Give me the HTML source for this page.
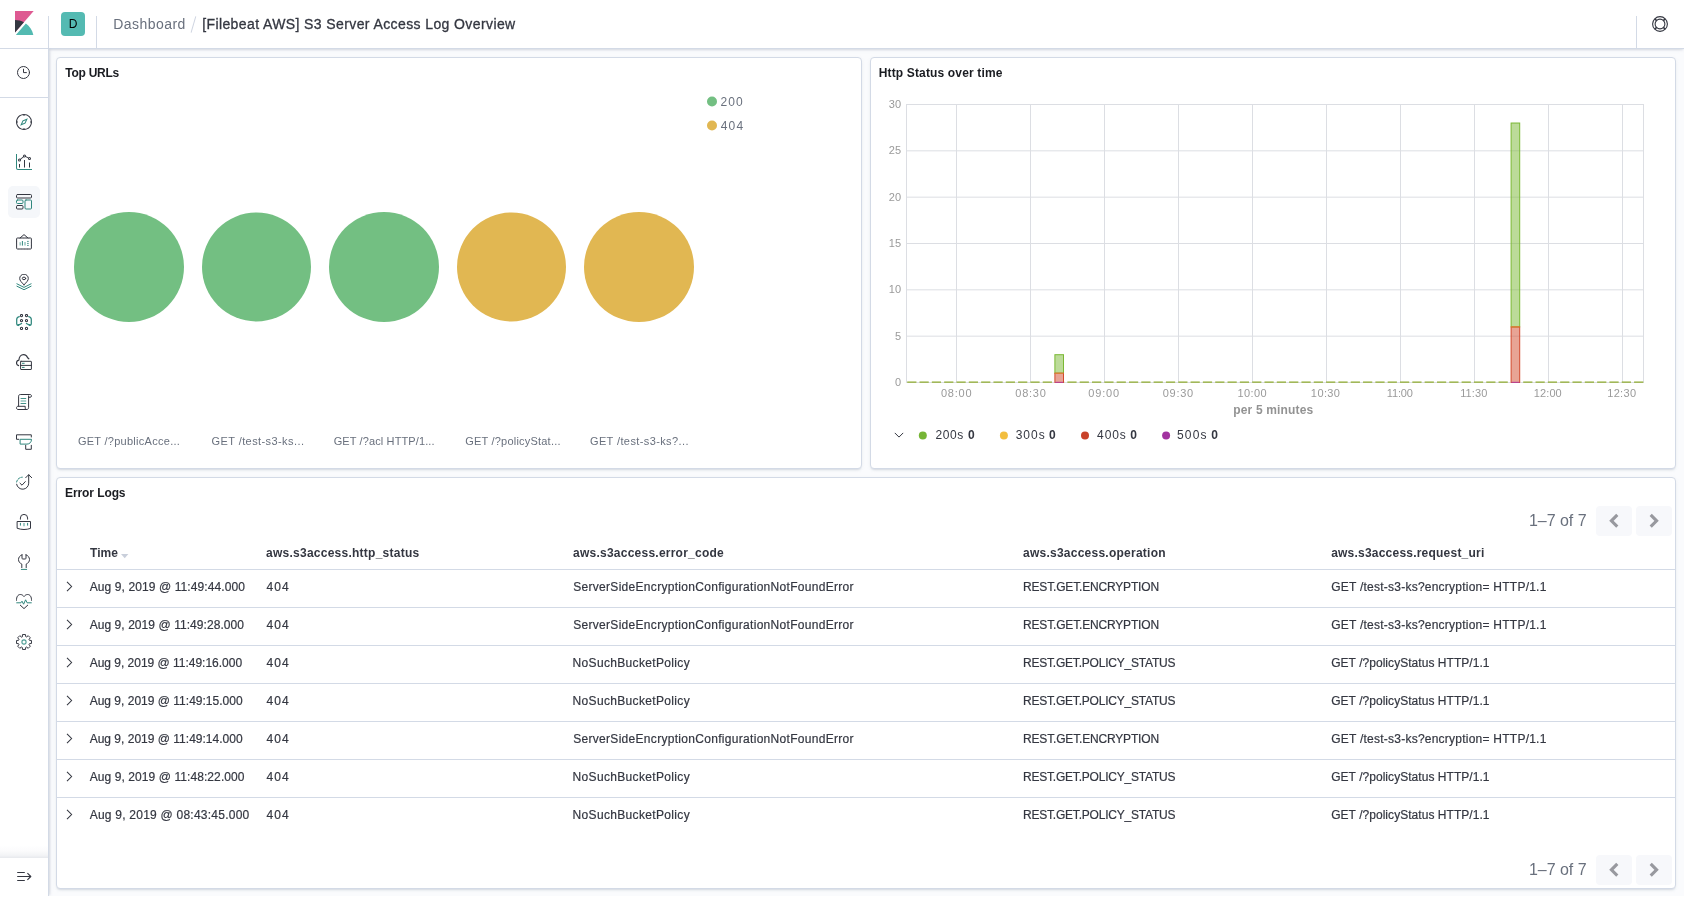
<!DOCTYPE html>
<html lang="en">
<head>
<meta charset="utf-8">
<title>[Filebeat AWS] S3 Server Access Log Overview - Kibana</title>
<style>
*{box-sizing:border-box;margin:0;padding:0}
html,body{width:1684px;height:897px;overflow:hidden;background:#fff}
body{font-family:"Liberation Sans",sans-serif;color:#343741;font-size:14px;position:relative}
#app{position:absolute;left:0;top:0;width:1684px;height:896px;background:#fafbfd;overflow:hidden;will-change:transform}
.abs{position:absolute}
/* header */
#header{position:absolute;left:0;top:0;width:1684px;height:49px;background:#fff;border-bottom:1px solid #d3dae6;box-shadow:0 2px 2px -1px rgba(152,162,179,.3),0 1px 5px -2px rgba(152,162,179,.3);z-index:5}
.hsep{position:absolute;top:16px;width:1px;height:32px;background:#d3dae6}
#avatar{position:absolute;left:61px;top:12px;width:24px;height:24px;border-radius:4px;background:#54bab2;color:#000;font-size:12px;font-weight:400;text-align:center;line-height:24px}
#c3{-webkit-text-stroke:.3px #343741}
.crumb{position:absolute;top:15px;height:18px;line-height:18px;font-size:14px;white-space:nowrap}
/* sidebar */
#nav{position:absolute;left:0;top:49px;width:49px;height:847px;background:#fff;border-right:1px solid #d3dae6;box-shadow:2px 0 2px -1px rgba(152,162,179,.3),1px 0 5px -2px rgba(152,162,179,.3);z-index:6}
#navcover{position:absolute;left:0;top:0;width:48px;height:49px;background:#fff;border-bottom:1px solid #d3dae6;z-index:7}
.ni{position:absolute;left:16px;width:16px;height:16px}
.ni svg{display:block;width:16px;height:16px;fill:#343741}
.ni .s{fill:#3b9a92}
/* panels */
.panel{position:absolute;background:#fff;border:1px solid #d3dae6;border-radius:4px;box-shadow:0 2px 2px -1px rgba(152,162,179,.3),0 1px 5px -2px rgba(152,162,179,.3)}
.ptitle{position:absolute;left:8px;top:8px;font-size:12px;font-weight:700;color:#1a1c21;line-height:14px;white-space:nowrap}
.t{position:absolute;white-space:nowrap}
.pg{font-size:16px;line-height:20px;color:#69707d}
.pb svg{transform:translateY(-.7px)}
.pb{position:absolute;width:35.500px;height:30px;border-radius:4px;background:#f7f8fb;display:flex;align-items:center;justify-content:center}
.th{font-size:12px;line-height:14px;font-weight:700;color:#343741}
.td{font-size:12px;line-height:14px;color:#343741;-webkit-text-stroke:.2px #343741}
.rl{position:absolute;left:0;width:1618px;height:1px;background:#d3dae6}

.lg{font-size:12px;line-height:14px;color:#69707d;letter-spacing:.3px}
.bl{top:376px;width:0;overflow:visible;font-size:11px;line-height:14px;color:#69707d;display:flex;justify-content:center;letter-spacing:.3px}
.bl span{flex:none}

</style>
<style id="tune">
#bl1{letter-spacing:0.276px}
#bl2{letter-spacing:0.414px;transform:translate(1.44px,0.00px)}
#bl3{letter-spacing:0.116px;transform:translate(0.16px,0.00px)}
#bl4{letter-spacing:0.209px;transform:translate(1.44px,0.00px)}
#bl5{letter-spacing:0.391px;transform:translate(0.40px,0.00px)}
#c1{letter-spacing:0.460px;transform:translate(0.16px,0.00px)}
#c3{letter-spacing:0.398px;transform:translate(0.16px,0.00px)}
#h0{letter-spacing:0.053px;transform:translate(0.48px,0.00px)}
#h1{letter-spacing:0.250px;transform:translate(-0.48px,0.00px)}
#h2{letter-spacing:0.240px;transform:translate(-0.48px,0.00px)}
#h3{letter-spacing:0.244px;transform:translate(-0.48px,0.00px)}
#h4{letter-spacing:0.216px;transform:translate(-0.32px,0.00px)}
#lg1{letter-spacing:1.120px;transform:translate(-0.48px,0.00px)}
#lg2{letter-spacing:1.200px;transform:translate(-0.32px,0.00px)}
#ln0{letter-spacing:0.533px;transform:translate(-0.08px,0.00px)}
#ln1{letter-spacing:1.013px;transform:translate(-1.04px,0.00px)}
#ln2{letter-spacing:0.907px;transform:translate(-0.72px,0.00px)}
#ln3{letter-spacing:1.120px;transform:translate(-1.84px,0.00px)}
#per5{letter-spacing:0.167px;transform:translate(0.16px,0.00px)}
#pg1{letter-spacing:-0.023px;transform:translate(-1.12px,0.00px)}
#pg2{letter-spacing:-0.023px;transform:translate(-1.12px,0.00px)}
#r0c0{letter-spacing:0.102px;transform:translate(0.16px,0.00px)}
#r0c1{letter-spacing:1.120px}
#r0c2{letter-spacing:0.302px;transform:translate(-0.32px,0.00px)}
#r0c3{letter-spacing:-0.169px;transform:translate(-0.48px,0.00px)}
#r0c4{letter-spacing:0.238px;transform:translate(-0.32px,0.00px)}
#r1c0{letter-spacing:0.064px;transform:translate(0.16px,0.00px)}
#r1c1{letter-spacing:1.120px}
#r1c2{letter-spacing:0.302px;transform:translate(-0.32px,0.00px)}
#r1c3{letter-spacing:-0.169px;transform:translate(-0.48px,0.00px)}
#r1c4{letter-spacing:0.238px;transform:translate(-0.32px,0.00px)}
#r2c0{letter-spacing:-0.013px;transform:translate(0.16px,0.00px)}
#r2c1{letter-spacing:1.120px}
#r2c2{letter-spacing:0.339px;transform:translate(-0.96px,0.00px)}
#r2c3{letter-spacing:-0.213px;transform:translate(-0.48px,0.00px)}
#r2c4{letter-spacing:0.043px;transform:translate(-0.32px,0.00px)}
#r3c0{letter-spacing:0.006px;transform:translate(0.16px,0.00px)}
#r3c1{letter-spacing:1.120px}
#r3c2{letter-spacing:0.339px;transform:translate(-0.96px,0.00px)}
#r3c3{letter-spacing:-0.213px;transform:translate(-0.48px,0.00px)}
#r3c4{letter-spacing:0.043px;transform:translate(-0.32px,0.00px)}
#r4c0{letter-spacing:0.006px;transform:translate(0.16px,0.00px)}
#r4c1{letter-spacing:1.120px}
#r4c2{letter-spacing:0.302px;transform:translate(-0.32px,0.00px)}
#r4c3{letter-spacing:-0.169px;transform:translate(-0.48px,0.00px)}
#r4c4{letter-spacing:0.238px;transform:translate(-0.32px,0.00px)}
#r5c0{letter-spacing:0.083px;transform:translate(0.16px,0.00px)}
#r5c1{letter-spacing:1.120px}
#r5c2{letter-spacing:0.339px;transform:translate(-0.96px,0.00px)}
#r5c3{letter-spacing:-0.213px;transform:translate(-0.48px,0.00px)}
#r5c4{letter-spacing:0.043px;transform:translate(-0.32px,0.00px)}
#r6c0{letter-spacing:0.237px;transform:translate(0.16px,0.00px)}
#r6c1{letter-spacing:1.120px}
#r6c2{letter-spacing:0.339px;transform:translate(-0.96px,0.00px)}
#r6c3{letter-spacing:-0.213px;transform:translate(-0.48px,0.00px)}
#r6c4{letter-spacing:0.043px;transform:translate(-0.32px,0.00px)}
#t1{letter-spacing:-0.274px;transform:translate(0.32px,0.00px)}
#t2{letter-spacing:0.152px;transform:translate(-0.32px,0.00px)}
#t3{letter-spacing:-0.089px}
#xl0{letter-spacing:0.800px;transform:translate(0.48px,0.00px)}
#xl1{letter-spacing:0.740px;transform:translate(0.72px,0.00px)}
#xl2{letter-spacing:0.800px;transform:translate(-0.08px,0.00px)}
#xl3{letter-spacing:0.740px;transform:translate(0.16px,0.00px)}
#xl4{letter-spacing:0.380px;transform:translate(0.08px,0.00px)}
#xl5{letter-spacing:0.400px;transform:translate(-0.56px,0.00px)}
#xl6{letter-spacing:-0.160px;transform:translate(-0.40px,0.00px)}
#xl7{letter-spacing:0.080px;transform:translate(-0.40px,0.00px)}
#xl8{letter-spacing:0.120px;transform:translate(-0.40px,0.00px)}
#xl9{letter-spacing:0.300px;transform:translate(-0.40px,0.00px)}
</style>
</head>
<body>
<div id="app">

<!-- HEADER -->
<div id="header">
  <div class="hsep" style="left:48px"></div>
  <div class="hsep" style="left:96px"></div>
  <div id="avatar">D</div>
  <div class="crumb" id="c1" style="left:113px;color:#69707d">Dashboard</div>
  <div class="abs" style="left:193px;top:15.500px;width:1px;height:16.500px;background:#cfd5e1;transform:rotate(16deg)"></div>
  <div class="crumb" id="c3" style="left:202px;color:#343741">[Filebeat AWS] S3 Server Access Log Overview</div>
  <div class="hsep" style="left:1636px"></div>
  <svg class="abs" style="left:1652px;top:16px" width="16" height="16" viewBox="0 0 16 16" fill="none" stroke="#343741" stroke-width="1.1"><circle cx="8" cy="8" r="7.400"/><circle cx="8" cy="8" r="4.900"/><path d="M2.800 2.800l1.800 1.800M13.200 2.800l-1.800 1.800M2.800 13.200l1.800-1.800M13.200 13.200l-1.800-1.800" stroke-width="1.500"/></svg>
</div>
<div id="navcover">
  <svg class="abs" style="left:12px;top:11px" width="24" height="24" viewBox="0 0 32 32"><polygon fill="#de5a92" points="4 0 4 28.789 28.935 .017"/><path fill="#343741" d="M4,12 L4,28.789 L15.906,15.051 C12.368,13.115 8.317,12 4,12"/><path fill="#53bab1" d="M18.4791,16.6643 L6.2681,30.7543 L5.1861,32.0003 L28.4381,32.0003 C27.1631,25.7073 23.6231,20.2623 18.4791,16.6643"/></svg>
</div>

<!-- SIDEBAR -->
<div id="nav">
  <div class="abs" style="left:0;top:48px;width:48px;height:1px;background:#d3dae6"></div>
  <div class="abs" style="left:0;top:796px;width:48px;height:13px;background:linear-gradient(to bottom,rgba(152,162,179,0) 0%,rgba(152,162,179,.04) 45%,rgba(152,162,179,.12) 80%,rgba(152,162,179,.24) 100%)"></div>
  <div class="abs" style="left:8px;top:137px;width:32px;height:32px;border-radius:5px;background:#f5f7fa"></div>
  <svg class="abs" style="left:16px;top:16px" width="16" height="16" viewBox="0 0 16 16" fill="none" stroke="#343741" stroke-width="1" stroke-linecap="round" stroke-linejoin="round"><circle cx="7.5" cy="7.5" r="6"/><path d="M7.5 4.2V7.6H10.4"/></svg>
  <svg class="abs" style="left:16px;top:65px" width="16" height="16" viewBox="0 0 32 32" fill="none" stroke="#343741" stroke-width="1" stroke-linecap="round" stroke-linejoin="round"><path stroke="none" fill="#2f877d" d="M8.33 23.67l4.79-10.55 10.55-4.79-4.79 10.55-10.55 4.79zm6.3-9l-2.28 5 5-2.28 2.28-5-5 2.28z"/><path stroke="none" fill="#343741" d="M16 0C7.163 0 0 7.163 0 16s7.163 16 16 16 16-7.163 16-16A16 16 0 0 0 16 0zm1 29.950V28h-2v1.950A14 14 0 0 1 2.050 17H4v-2H2.050A14 14 0 0 1 15 2.050V4h2V2.050A14 14 0 0 1 29.950 15H28v2h1.950A14 14 0 0 1 17 29.950z"/></svg>
  <svg class="abs" style="left:16px;top:105px" width="16" height="16" viewBox="0 0 32 32" fill="none" stroke="#343741" stroke-width="1" stroke-linecap="round" stroke-linejoin="round"><path stroke="none" fill="#2f877d" d="M32 32H4a4 4 0 0 1-4-4V0h2v28a2 2 0 0 0 2 2h28v2z"/><path stroke="none" fill="#343741" d="M6 20h2v7H6zM16 12h2v15h-2zM26 17h2v10h-2z"/><path stroke="none" fill="#343741" d="M27 6a3 3 0 0 0-2.080.840L20 4.360A2.200 2.200 0 0 0 20 4a3 3 0 0 0-6 0c.001.341.062.680.180 1L9 9.740A3 3 0 0 0 7 9a3 3 0 1 0 3 3 3 3 0 0 0-.180-1L15 6.260A3 3 0 0 0 17 7a3 3 0 0 0 2.080-.840L24 8.640A2.200 2.200 0 0 0 24 9a3 3 0 1 0 3-3zM7 13a1 1 0 1 1 0-2 1 1 0 0 1 0 2zm10-8a1 1 0 1 1 0-2 1 1 0 0 1 0 2zm10 5a1 1 0 1 1 0-2 1 1 0 0 1 0 2z"/></svg>
  <svg class="abs" style="left:16px;top:145px" width="16" height="16" viewBox="0 0 16 16" fill="none" stroke="#343741" stroke-width="1" stroke-linecap="round" stroke-linejoin="round"><rect x="0.5" y="0.5" width="15" height="3.5" rx="1"/><rect x="0.5" y="6" width="6.5" height="3.5" rx="1" stroke="#2f877d"/><rect x="0.5" y="11.5" width="6.5" height="3.5" rx="1"/><rect x="9" y="6" width="6.500" height="9" rx="1" stroke="#2f877d"/></svg>
  <svg class="abs" style="left:16px;top:185px" width="16" height="16" viewBox="0 0 16 16" fill="none" stroke="#343741" stroke-width="1" stroke-linecap="round" stroke-linejoin="round"><path d="M4 4L8 0.600 12 4"/><rect x="0.6" y="4" width="14.800" height="11" rx="0.8" stroke-dasharray="2.600 0.500"/><path d="M4.200 8.200v3.400M9 8v3.600" stroke="#8fc1ba" stroke-width="1.400" stroke-linecap="butt"/><path d="M6.400 7v4.600" stroke="#2f877d" stroke-linecap="butt"/><path d="M11 7.400h1.800M11 9.400h1.800M11 11.400h1.800" stroke="#2f877d" stroke-width="0.800" stroke-linecap="butt"/></svg>
  <svg class="abs" style="left:16px;top:225px" width="16" height="16" viewBox="0 0 16 16" fill="none" stroke="#343741" stroke-width="1" stroke-linecap="round" stroke-linejoin="round"><path d="M0.900 9.800L8 13.400 15.100 9.800M0.900 12.200L8 15.700 15.100 12.200" stroke="#2f877d"/><path d="M8 10.800C5.500 8.200 3.700 6.600 3.700 4.500a4.300 4.300 0 0 1 8.600 0c0 2.100-1.800 3.700-4.300 6.300z" fill="#fff"/><ellipse cx="8" cy="4.400" rx="1.700" ry="1.300"/></svg>
  <svg class="abs" style="left:16px;top:265px" width="16" height="16" viewBox="0 0 16 16" fill="none" stroke="#343741" stroke-width="1" stroke-linecap="round" stroke-linejoin="round"><circle cx="5.5" cy="1.6" r="1.100" stroke-width="1.100"/><circle cx="5.5" cy="6.6" r="1.100" stroke-width="1.100"/><circle cx="5.5" cy="14.4" r="1.100" stroke-width="1.100"/><circle cx="10.5" cy="1.6" r="1.100" stroke-width="1.100"/><circle cx="10.5" cy="6.6" r="1.100" stroke-width="1.100"/><circle cx="10.5" cy="14.4" r="1.100" stroke-width="1.100"/><path d="M3.300 2.600C1.500 3 0.700 4 0.700 5.500v4.300c0 .8.500 1.400 1.300 1.600l3.600-1.900M12.700 2.600c1.800.4 2.600 1.400 2.600 2.900v4.300c0 .8-.5 1.400-1.300 1.600l-3.600-1.900" stroke="#2f877d" stroke-width="1.250"/><path d="M1 10.300l1.800 2 .7-2.400zM15 10.300l-1.800 2-.7-2.400z" fill="#2f877d" stroke="none"/></svg>
  <svg class="abs" style="left:16px;top:305px" width="16" height="16" viewBox="0 0 16 16" fill="none" stroke="#343741" stroke-width="1" stroke-linecap="round" stroke-linejoin="round"><path d="M2.600 11.600C1.200 11.200 0.500 10.200 0.500 8.900c0-1.500 1-2.600 2.400-2.800C3.100 3 5 0.600 7.500 0.600c2 0 3.500 1.300 4.100 3.300.500.100.900.400 1.300.900" stroke-width="1.150"/><rect x="4.600" y="7.300" width="10.800" height="8.200" rx="0.400"/><path d="M4.600 11.400h10.800"/><path d="M6.400 9.300h1.800M6.400 13.400h1.800" stroke="#2f877d"/></svg>
  <svg class="abs" style="left:16px;top:345px" width="16" height="16" viewBox="0 0 16 16" fill="none" stroke="#343741" stroke-width="1" stroke-linecap="round" stroke-linejoin="round"><path d="M2.600 12V2.200c0-1 .700-1.700 1.700-1.700h9.600c.900 0 1.600.600 1.600 1.400s-.600 1.400-1.400 1.400h-1.500V1.900M12.600 3.300v10.400c0 1-.800 1.800-1.800 1.800H2c-.900 0-1.500-.700-1.500-1.600s.600-1.600 1.500-1.600h7.200v1.600c0 .800.500 1.500 1.300 1.600"/><path d="M4.600 4.500h5.600M4.600 9.500h5.600" stroke="#2f877d" stroke-width="0.900" stroke-linecap="butt"/><path d="M4.600 7h5.600" stroke="#8fc1ba" stroke-width="1.400" stroke-linecap="butt"/></svg>
  <svg class="abs" style="left:16px;top:385px" width="16" height="16" viewBox="0 0 16 16" fill="none" stroke="#343741" stroke-width="1" stroke-linecap="round" stroke-linejoin="round"><path d="M2.800 5.300H0.500V0.800h14.800v2.200M9.700 11.300v4h5.600v-4"/><path d="M4.500 5.300h11c0 3-2 4.800-4.500 4.800H4.500z" stroke="#2f877d"/></svg>
  <svg class="abs" style="left:16px;top:425px" width="16" height="16" viewBox="0 0 16 16" fill="none" stroke="#343741" stroke-width="1" stroke-linecap="round" stroke-linejoin="round"><path d="M0.600 10.200a6.100 6.100 0 0 0 12.100-1V0.800M9.700 3.700l3-3 3 3M4 9.200l2 2 3.300-3.600"/><path d="M0.600 8a6.100 6.100 0 0 1 5.700-4.800" stroke="#2f877d" stroke-dasharray="2.200 1.300"/></svg>
  <svg class="abs" style="left:16px;top:465px" width="16" height="16" viewBox="0 0 16 16" fill="none" stroke="#343741" stroke-width="1" stroke-linecap="round" stroke-linejoin="round"><path d="M4.400 5.200V4a3.600 3.600 0 0 1 7.200 0v1.200M1.500 7.500h13v6.900c-2 .700-4.300 1.100-6.500 1.100s-4.500-.400-6.500-1.100z"/><path d="M4.400 8.900v2.700M11.600 8.900v2.700" stroke="#2f877d" stroke-linecap="butt"/><path d="M8 8.900v3.400" stroke="#8fc1ba" stroke-width="1.600" stroke-linecap="butt"/></svg>
  <svg class="abs" style="left:16px;top:505px" width="16" height="16" viewBox="0 0 16 16" fill="none" stroke="#343741" stroke-width="1" stroke-linecap="round" stroke-linejoin="round"><path d="M6 0.800C3.800 1.600 2.500 3.400 2.500 5.600c0 1.900 1.200 3.500 3.300 4.500v3.500M10 0.800c2.200.800 3.500 2.600 3.500 4.800 0 1.900-1.200 3.500-3.300 4.500v3.500M6 0.800v3.400c0 .500.300.800.800.800h2.400c.500 0 .800-.300.800-.800V0.800"/><path d="M5.300 15.400h5.400" stroke="#2f877d"/></svg>
  <svg class="abs" style="left:16px;top:545px" width="16" height="16" viewBox="0 0 16 16" fill="none" stroke="#343741" stroke-width="1" stroke-linecap="round" stroke-linejoin="round"><path d="M0.500 6.300C0.300 2.800 2 0.500 4.300 0.500 5.800 0.500 7 1.200 8 2.600 9 1.200 10.200 0.500 11.700 0.500c2.300 0 4 2.300 3.800 5.800M4.300 11.200L8 14.600l3.700-3.400"/><path d="M0.300 8.800h4.600l1.100-1.600 1.600 3 2-4.400 1.500 3h4.600" stroke="#2f877d" stroke-linecap="butt"/></svg>
  <svg class="abs" style="left:16px;top:585px" width="16" height="16" viewBox="0 0 16 16" fill="none" stroke="#343741" stroke-width="1" stroke-linecap="round" stroke-linejoin="round"><path d="M6.32 2.55L6.49 0.55L9.51 0.55L9.68 2.55L10.66 2.96L12.20 1.67L14.33 3.80L13.04 5.34L13.45 6.32L15.45 6.49L15.45 9.51L13.45 9.68L13.04 10.66L14.33 12.20L12.20 14.33L10.66 13.04L9.68 13.45L9.51 15.45L6.49 15.45L6.32 13.45L5.34 13.04L3.80 14.33L1.67 12.20L2.96 10.66L2.55 9.68L0.55 9.51L0.55 6.49L2.55 6.32L2.96 5.34L1.67 3.80L3.80 1.67L5.34 2.96z"/><circle cx="8" cy="8" r="2.100" stroke="#4f9e95" stroke-width="1.100"/></svg>
  <svg class="abs" style="left:16px;top:820px" width="16" height="16" viewBox="0 0 16 16" fill="none" stroke="#343741" stroke-width="1" stroke-linecap="round" stroke-linejoin="round"><path d="M1.200 3.500h7.600M1.200 7.500h13.300M1.200 11.500h7.600M11.400 4.100l3.400 3.400-3.400 3.400" stroke-width="1.100" stroke-linecap="butt"/></svg>
</div>

<!-- PANEL 1 -->
<div class="panel" id="p1" style="left:56px;top:57px;width:806px;height:412px">
  <div class="ptitle" id="t1">Top URLs</div>

  <svg class="abs" style="left:0;top:0" width="804" height="410" viewBox="57 58 804 410">
    <circle cx="129" cy="267" r="55" fill="#73bf82"/>
    <circle cx="256.5" cy="267" r="54.5" fill="#73bf82"/>
    <circle cx="384" cy="267" r="55" fill="#73bf82"/>
    <circle cx="511.5" cy="267" r="54.5" fill="#e1b752"/>
    <circle cx="639" cy="267" r="55" fill="#e1b752"/>
    <circle cx="712" cy="101.5" r="5" fill="#73bf82"/>
    <circle cx="712" cy="125.5" r="5" fill="#e1b752"/>
  </svg>
  <div class="t lg" id="lg1" style="left:664px;top:37px">200</div>
  <div class="t lg" id="lg2" style="left:664px;top:61px">404</div>
  <div class="t bl" style="left:72px"><span id="bl1">GET /?publicAcce...</span></div>
  <div class="t bl" style="left:199.5px"><span id="bl2">GET /test-s3-ks...</span></div>
  <div class="t bl" style="left:327px"><span id="bl3">GET /?acl HTTP/1...</span></div>
  <div class="t bl" style="left:454.5px"><span id="bl4">GET /?policyStat...</span></div>
  <div class="t bl" style="left:582px"><span id="bl5">GET /test-s3-ks?...</span></div>

</div>

<!-- PANEL 2 -->
<div class="panel" id="p2" style="left:870px;top:57px;width:806px;height:412px">
  <div class="ptitle" id="t2">Http Status over time</div>
  <svg class="abs" style="left:0;top:0" width="804" height="410" viewBox="871 58 804 410" font-family="Liberation Sans, sans-serif">
  <path d="M906.0 382.50H1644.0M906.0 336.17H1644.0M906.0 289.83H1644.0M906.0 243.50H1644.0M906.0 197.17H1644.0M906.0 150.83H1644.0M906.0 104.50H1644.0M956.5 104.5V382.5M1030.5 104.5V382.5M1104.5 104.5V382.5M1178.5 104.5V382.5M1252.5 104.5V382.5M1326.5 104.5V382.5M1400.5 104.5V382.5M1474.5 104.5V382.5M1548.5 104.5V382.5M1622.5 104.5V382.5M906.5 104.5V382.5M1643.5 104.5V382.5" stroke="#dcdee3" stroke-width="1" fill="none"/>
  <path d="M907.2 382.2H1644.0" stroke="#8dab2e" stroke-width="1.3" stroke-dasharray="9.22 3.1" fill="none"/>
  <rect x="1054.3" y="381" width="9.9" height="3" fill="#fff"/><rect x="1510.5" y="381" width="9.9" height="3" fill="#fff"/>
  <rect x="1054.90" y="354.70" width="8.6" height="18.53" fill="#7ab833" fill-opacity=".5" stroke="#7ab833" stroke-width="1"/><rect x="1054.90" y="373.23" width="8.6" height="9.27" fill="#d2492c" fill-opacity=".5" stroke="#d2492c" stroke-width="1"/><path d="M1055.20 382.3h8.0" stroke="#b644a6" stroke-width="1"/>
  <rect x="1511.10" y="123.03" width="8.6" height="203.87" fill="#7ab833" fill-opacity=".5" stroke="#7ab833" stroke-width="1"/><rect x="1511.10" y="326.90" width="8.6" height="55.60" fill="#d2492c" fill-opacity=".5" stroke="#d2492c" stroke-width="1"/><path d="M1511.40 382.3h8.0" stroke="#b644a6" stroke-width="1"/>
  <path d="M1054.9 373.23h8.6" stroke="#e0903a" stroke-width="1"/><path d="M1511.1 326.90h8.6" stroke="#e0903a" stroke-width="1"/>
  <text id="yl0" x="901.3" y="385.90" text-anchor="end" font-size="11" fill="#9a9a9a" letter-spacing="0.2">0</text>
  <text id="yl1" x="901.3" y="339.57" text-anchor="end" font-size="11" fill="#9a9a9a" letter-spacing="0.2">5</text>
  <text id="yl2" x="901.3" y="293.23" text-anchor="end" font-size="11" fill="#9a9a9a" letter-spacing="0.2">10</text>
  <text id="yl3" x="901.3" y="246.90" text-anchor="end" font-size="11" fill="#9a9a9a" letter-spacing="0.2">15</text>
  <text id="yl4" x="901.3" y="200.57" text-anchor="end" font-size="11" fill="#9a9a9a" letter-spacing="0.2">20</text>
  <text id="yl5" x="901.3" y="154.23" text-anchor="end" font-size="11" fill="#9a9a9a" letter-spacing="0.2">25</text>
  <text id="yl6" x="901.3" y="107.90" text-anchor="end" font-size="11" fill="#9a9a9a" letter-spacing="0.2">30</text>
  <text id="xl0" x="956.2" y="397.2" text-anchor="middle" font-size="11" fill="#9a9a9a" letter-spacing="0.35">08:00</text>
  <text id="xl1" x="1030.2" y="397.2" text-anchor="middle" font-size="11" fill="#9a9a9a" letter-spacing="0.35">08:30</text>
  <text id="xl2" x="1104.2" y="397.2" text-anchor="middle" font-size="11" fill="#9a9a9a" letter-spacing="0.35">09:00</text>
  <text id="xl3" x="1178.2" y="397.2" text-anchor="middle" font-size="11" fill="#9a9a9a" letter-spacing="0.35">09:30</text>
  <text id="xl4" x="1252.2" y="397.2" text-anchor="middle" font-size="11" fill="#9a9a9a" letter-spacing="0.35">10:00</text>
  <text id="xl5" x="1326.2" y="397.2" text-anchor="middle" font-size="11" fill="#9a9a9a" letter-spacing="0.35">10:30</text>
  <text id="xl6" x="1400.2" y="397.2" text-anchor="middle" font-size="11" fill="#9a9a9a" letter-spacing="0.35">11:00</text>
  <text id="xl7" x="1474.2" y="397.2" text-anchor="middle" font-size="11" fill="#9a9a9a" letter-spacing="0.35">11:30</text>
  <text id="xl8" x="1548.2" y="397.2" text-anchor="middle" font-size="11" fill="#9a9a9a" letter-spacing="0.35">12:00</text>
  <text id="xl9" x="1622.2" y="397.2" text-anchor="middle" font-size="11" fill="#9a9a9a" letter-spacing="0.35">12:30</text>
  <text id="per5" x="1273.2" y="413.6" text-anchor="middle" font-size="12" font-weight="700" fill="#939393" letter-spacing="0.05">per 5 minutes</text>
  <path d="M894.8 432.9l4.2 4.200 4.200-4.200" stroke="#343741" stroke-width="1" fill="none"/>
  <circle cx="922.8" cy="435.6" r="4" fill="#76b536"/>
  <text id="ln0" x="935.6" y="439.3" font-size="12" fill="#343741" letter-spacing="0.25">200s</text>
  <text id="lv0" x="968.0" y="439.3" font-size="12" font-weight="700" fill="#343741">0</text>
  <circle cx="1003.9" cy="435.6" r="4" fill="#f2be3f"/>
  <text id="ln1" x="1016.7" y="439.3" font-size="12" fill="#343741" letter-spacing="0.25">300s</text>
  <text id="lv1" x="1049.1" y="439.3" font-size="12" font-weight="700" fill="#343741">0</text>
  <circle cx="1085.0" cy="435.6" r="4" fill="#c9422a"/>
  <text id="ln2" x="1097.8" y="439.3" font-size="12" fill="#343741" letter-spacing="0.25">400s</text>
  <text id="lv2" x="1130.2" y="439.3" font-size="12" font-weight="700" fill="#343741">0</text>
  <circle cx="1166.1" cy="435.6" r="4" fill="#a233a0"/>
  <text id="ln3" x="1178.9" y="439.3" font-size="12" fill="#343741" letter-spacing="0.25">500s</text>
  <text id="lv3" x="1211.3" y="439.3" font-size="12" font-weight="700" fill="#343741">0</text>
  </svg>
</div>

<!-- PANEL 3 -->
<div class="panel" id="p3" style="left:56px;top:477px;width:1620px;height:412px">
  <div class="ptitle" id="t3">Error Logs</div>
  <div class="t pg" id="pg1" style="left:1473px;top:33px">1–7 of 7</div>
  <div class="pb" style="left:1539.300px;top:28px"><svg width="10" height="15" viewBox="0 0 10 15"><path d="M8.3 1.6L2.4 7.5l5.9 5.9" fill="none" stroke="#98999f" stroke-width="3.1"/></svg></div>
  <div class="pb" style="left:1579px;top:28px"><svg width="10" height="15" viewBox="0 0 10 15"><path d="M1.7 1.6l5.9 5.9-5.9 5.9" fill="none" stroke="#98999f" stroke-width="3.1"/></svg></div>
  <div class="t pg" id="pg2" style="left:1473px;top:382px">1–7 of 7</div>
  <div class="pb" style="left:1539.300px;top:377px"><svg width="10" height="15" viewBox="0 0 10 15"><path d="M8.3 1.6L2.4 7.5l5.9 5.9" fill="none" stroke="#98999f" stroke-width="3.1"/></svg></div>
  <div class="pb" style="left:1579px;top:377px"><svg width="10" height="15" viewBox="0 0 10 15"><path d="M1.7 1.6l5.9 5.9-5.9 5.9" fill="none" stroke="#98999f" stroke-width="3.1"/></svg></div>
  <div class="t th" id="h0" style="left:32.5px;top:68px">Time</div>
  <div class="t th" id="h1" style="left:209.5px;top:68px">aws.s3access.http_status</div>
  <div class="t th" id="h2" style="left:516.5px;top:68px">aws.s3access.error_code</div>
  <div class="t th" id="h3" style="left:966.5px;top:68px">aws.s3access.operation</div>
  <div class="t th" id="h4" style="left:1274.5px;top:68px">aws.s3access.request_uri</div>
  <svg class="abs" style="left:63.599999999999994px;top:75.5px" width="8" height="5" viewBox="0 0 8 5"><path d="M0 0h7.4L3.7 4.2z" fill="#c9cfdb"/></svg>
  <div class="rl" style="top:91px"></div>
  <svg class="abs" style="left:9px;top:103px" width="7" height="11" viewBox="0 0 7 11"><path d="M1 0.9l4.6 4.6L1 10.1" fill="none" stroke="#343741" stroke-width="1.05"/></svg>
  <div class="t td" id="r0c0" style="left:32.5px;top:102px">Aug 9, 2019 @ 11:49:44.000</div>
  <div class="t td" id="r0c1" style="left:209.5px;top:102px">404</div>
  <div class="t td" id="r0c2" style="left:516.5px;top:102px">ServerSideEncryptionConfigurationNotFoundError</div>
  <div class="t td" id="r0c3" style="left:966.5px;top:102px">REST.GET.ENCRYPTION</div>
  <div class="t td" id="r0c4" style="left:1274.5px;top:102px">GET /test-s3-ks?encryption= HTTP/1.1</div>
  <div class="rl" style="top:129px"></div>
  <svg class="abs" style="left:9px;top:141px" width="7" height="11" viewBox="0 0 7 11"><path d="M1 0.9l4.6 4.6L1 10.1" fill="none" stroke="#343741" stroke-width="1.05"/></svg>
  <div class="t td" id="r1c0" style="left:32.5px;top:140px">Aug 9, 2019 @ 11:49:28.000</div>
  <div class="t td" id="r1c1" style="left:209.5px;top:140px">404</div>
  <div class="t td" id="r1c2" style="left:516.5px;top:140px">ServerSideEncryptionConfigurationNotFoundError</div>
  <div class="t td" id="r1c3" style="left:966.5px;top:140px">REST.GET.ENCRYPTION</div>
  <div class="t td" id="r1c4" style="left:1274.5px;top:140px">GET /test-s3-ks?encryption= HTTP/1.1</div>
  <div class="rl" style="top:167px"></div>
  <svg class="abs" style="left:9px;top:179px" width="7" height="11" viewBox="0 0 7 11"><path d="M1 0.9l4.6 4.6L1 10.1" fill="none" stroke="#343741" stroke-width="1.05"/></svg>
  <div class="t td" id="r2c0" style="left:32.5px;top:178px">Aug 9, 2019 @ 11:49:16.000</div>
  <div class="t td" id="r2c1" style="left:209.5px;top:178px">404</div>
  <div class="t td" id="r2c2" style="left:516.5px;top:178px">NoSuchBucketPolicy</div>
  <div class="t td" id="r2c3" style="left:966.5px;top:178px">REST.GET.POLICY_STATUS</div>
  <div class="t td" id="r2c4" style="left:1274.5px;top:178px">GET /?policyStatus HTTP/1.1</div>
  <div class="rl" style="top:205px"></div>
  <svg class="abs" style="left:9px;top:217px" width="7" height="11" viewBox="0 0 7 11"><path d="M1 0.9l4.6 4.6L1 10.1" fill="none" stroke="#343741" stroke-width="1.05"/></svg>
  <div class="t td" id="r3c0" style="left:32.5px;top:216px">Aug 9, 2019 @ 11:49:15.000</div>
  <div class="t td" id="r3c1" style="left:209.5px;top:216px">404</div>
  <div class="t td" id="r3c2" style="left:516.5px;top:216px">NoSuchBucketPolicy</div>
  <div class="t td" id="r3c3" style="left:966.5px;top:216px">REST.GET.POLICY_STATUS</div>
  <div class="t td" id="r3c4" style="left:1274.5px;top:216px">GET /?policyStatus HTTP/1.1</div>
  <div class="rl" style="top:243px"></div>
  <svg class="abs" style="left:9px;top:255px" width="7" height="11" viewBox="0 0 7 11"><path d="M1 0.9l4.6 4.6L1 10.1" fill="none" stroke="#343741" stroke-width="1.05"/></svg>
  <div class="t td" id="r4c0" style="left:32.5px;top:254px">Aug 9, 2019 @ 11:49:14.000</div>
  <div class="t td" id="r4c1" style="left:209.5px;top:254px">404</div>
  <div class="t td" id="r4c2" style="left:516.5px;top:254px">ServerSideEncryptionConfigurationNotFoundError</div>
  <div class="t td" id="r4c3" style="left:966.5px;top:254px">REST.GET.ENCRYPTION</div>
  <div class="t td" id="r4c4" style="left:1274.5px;top:254px">GET /test-s3-ks?encryption= HTTP/1.1</div>
  <div class="rl" style="top:281px"></div>
  <svg class="abs" style="left:9px;top:293px" width="7" height="11" viewBox="0 0 7 11"><path d="M1 0.9l4.6 4.6L1 10.1" fill="none" stroke="#343741" stroke-width="1.05"/></svg>
  <div class="t td" id="r5c0" style="left:32.5px;top:292px">Aug 9, 2019 @ 11:48:22.000</div>
  <div class="t td" id="r5c1" style="left:209.5px;top:292px">404</div>
  <div class="t td" id="r5c2" style="left:516.5px;top:292px">NoSuchBucketPolicy</div>
  <div class="t td" id="r5c3" style="left:966.5px;top:292px">REST.GET.POLICY_STATUS</div>
  <div class="t td" id="r5c4" style="left:1274.5px;top:292px">GET /?policyStatus HTTP/1.1</div>
  <div class="rl" style="top:319px"></div>
  <svg class="abs" style="left:9px;top:331px" width="7" height="11" viewBox="0 0 7 11"><path d="M1 0.9l4.6 4.6L1 10.1" fill="none" stroke="#343741" stroke-width="1.05"/></svg>
  <div class="t td" id="r6c0" style="left:32.5px;top:330px">Aug 9, 2019 @ 08:43:45.000</div>
  <div class="t td" id="r6c1" style="left:209.5px;top:330px">404</div>
  <div class="t td" id="r6c2" style="left:516.5px;top:330px">NoSuchBucketPolicy</div>
  <div class="t td" id="r6c3" style="left:966.5px;top:330px">REST.GET.POLICY_STATUS</div>
  <div class="t td" id="r6c4" style="left:1274.5px;top:330px">GET /?policyStatus HTTP/1.1</div>
</div>

</div>
</body>
</html>
